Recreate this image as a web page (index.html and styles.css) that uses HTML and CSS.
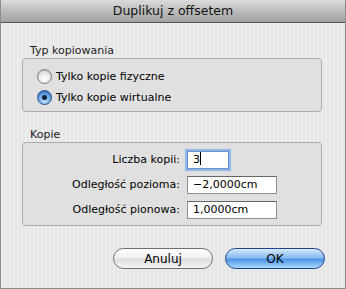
FILE: index.html
```html
<!DOCTYPE html>
<html lang="pl">
<head>
    <meta charset="UTF-8">
    <title>Duplikuj z offsetem</title>
    <link rel="stylesheet" href="styles.css">
</head>
<body>
    <div class="window">
        <div class="titlebar">Duplikuj z offsetem</div>

        <div class="content">
            <div class="group-label">Typ kopiowania</div>
            <div class="group-box radios">
                <label class="radio-row">
                    <span class="radio"></span>
                    <span>Tylko kopie fizyczne</span>
                </label>
                <label class="radio-row">
                    <span class="radio checked"></span>
                    <span>Tylko kopie wirtualne</span>
                </label>
            </div>

            <div class="group-label second">Kopie</div>
            <div class="group-box fields">
                <div class="field-row">
                    <span class="field-label">Liczba kopii:</span>
                    <span class="text-input short focused">3<span class="caret"></span></span>
                </div>
                <div class="field-row">
                    <span class="field-label">Odległość pozioma:</span>
                    <span class="text-input">&minus;2,0000cm</span>
                </div>
                <div class="field-row">
                    <span class="field-label">Odległość pionowa:</span>
                    <span class="text-input">1,0000cm</span>
                </div>
            </div>

            <div class="buttons">
                <button class="btn">Anuluj</button>
                <button class="btn default">OK</button>
            </div>
        </div>
    </div>
</body>
</html>
```

FILE: styles.css
```css
body {
    margin: 0;
    font-family: "Lucida Grande", "DejaVu Sans", sans-serif;
    font-size: 11px;
    color: #000;
}
.window {
    width: 346px;
    height: 289px;
    box-sizing: border-box;
    border: 1px solid #8c8c8c;
    border-top: none;
    background-color: #ebebeb;
    background-image: repeating-linear-gradient(90deg, #ececec 0, #ececec 2px, #e6e6e6 2px, #e6e6e6 4px);
}
.titlebar {
    height: 22px;
    line-height: 22px;
    text-align: center;
    font-size: 12.5px;
    color: #111;
    background: linear-gradient(#dcdcdc, #bcbcbc 50%, #a2a2a2);
    border-bottom: 1px solid #555;
}
.content {
    padding: 18px 20px 0 21px;
}
.group-label {
    padding: 1px 0 0 8px;
    height: 16px;
    line-height: 17px;
    color: #222;
}
.group-label.second {
    margin-top: 13px;
}
.group-box {
    border: 1px solid #aaaaaa;
    border-radius: 4px;
    background: #e0e0e0;
    width: 300px;
    box-sizing: border-box;
}
.radios {
    height: 54px;
    padding: 7px 0 0 14px;
}
.radio-row {
    display: flex;
    align-items: center;
    gap: 4px;
    height: 21px;
}
.radio {
    width: 13px;
    height: 13px;
    border-radius: 50%;
    border: 1px solid #7d7d7d;
    background: radial-gradient(circle at 50% 70%, #ffffff, #d6d6d6);
    box-shadow: inset 0 1px 1px rgba(0, 0, 0, 0.2);
    position: relative;
}
.radio.checked {
    border-color: #2b4e86;
    background: radial-gradient(circle at 50% 75%, #bfe3ff, #5b9ae0 60%, #2f6fc4);
}
.radio.checked::after {
    content: "";
    position: absolute;
    left: 4px;
    top: 4px;
    width: 5px;
    height: 5px;
    border-radius: 50%;
    background: #10203a;
}
.fields {
    height: 84px;
    padding-top: 4px;
}
.field-row {
    display: flex;
    align-items: center;
    height: 25px;
}
.field-label {
    width: 157px;
    text-align: right;
    padding-right: 7px;
}
.text-input {
    width: 90px;
    height: 18px;
    line-height: 16px;
    box-sizing: border-box;
    padding-left: 5px;
    background: #fff;
    border: 1px solid #8f8f8f;
    border-top-color: #666;
}
.text-input.short {
    width: 42px;
}
.text-input.focused {
    border-color: #6b8fc6;
    box-shadow: 0 0 0 2px #8fb6e8;
}
.caret {
    display: inline-block;
    width: 1px;
    height: 13px;
    background: #000;
    vertical-align: -2px;
}
.buttons {
    display: flex;
    justify-content: flex-end;
    gap: 12px;
    margin-top: 22px;
}
.btn {
    width: 100px;
    height: 21px;
    border-radius: 11px;
    border: 1px solid #6e6e6e;
    background: linear-gradient(#ffffff, #f0f0f0 45%, #dedede 55%, #f6f6f6);
    font-family: "Lucida Grande", "DejaVu Sans", sans-serif;
    font-size: 12px;
    color: #000;
    padding: 0;
}
.btn.default {
    border-color: #23408a;
    background: linear-gradient(#d6ebff, #86bcf2 45%, #4f95e6 55%, #a8dcff);
}
```
